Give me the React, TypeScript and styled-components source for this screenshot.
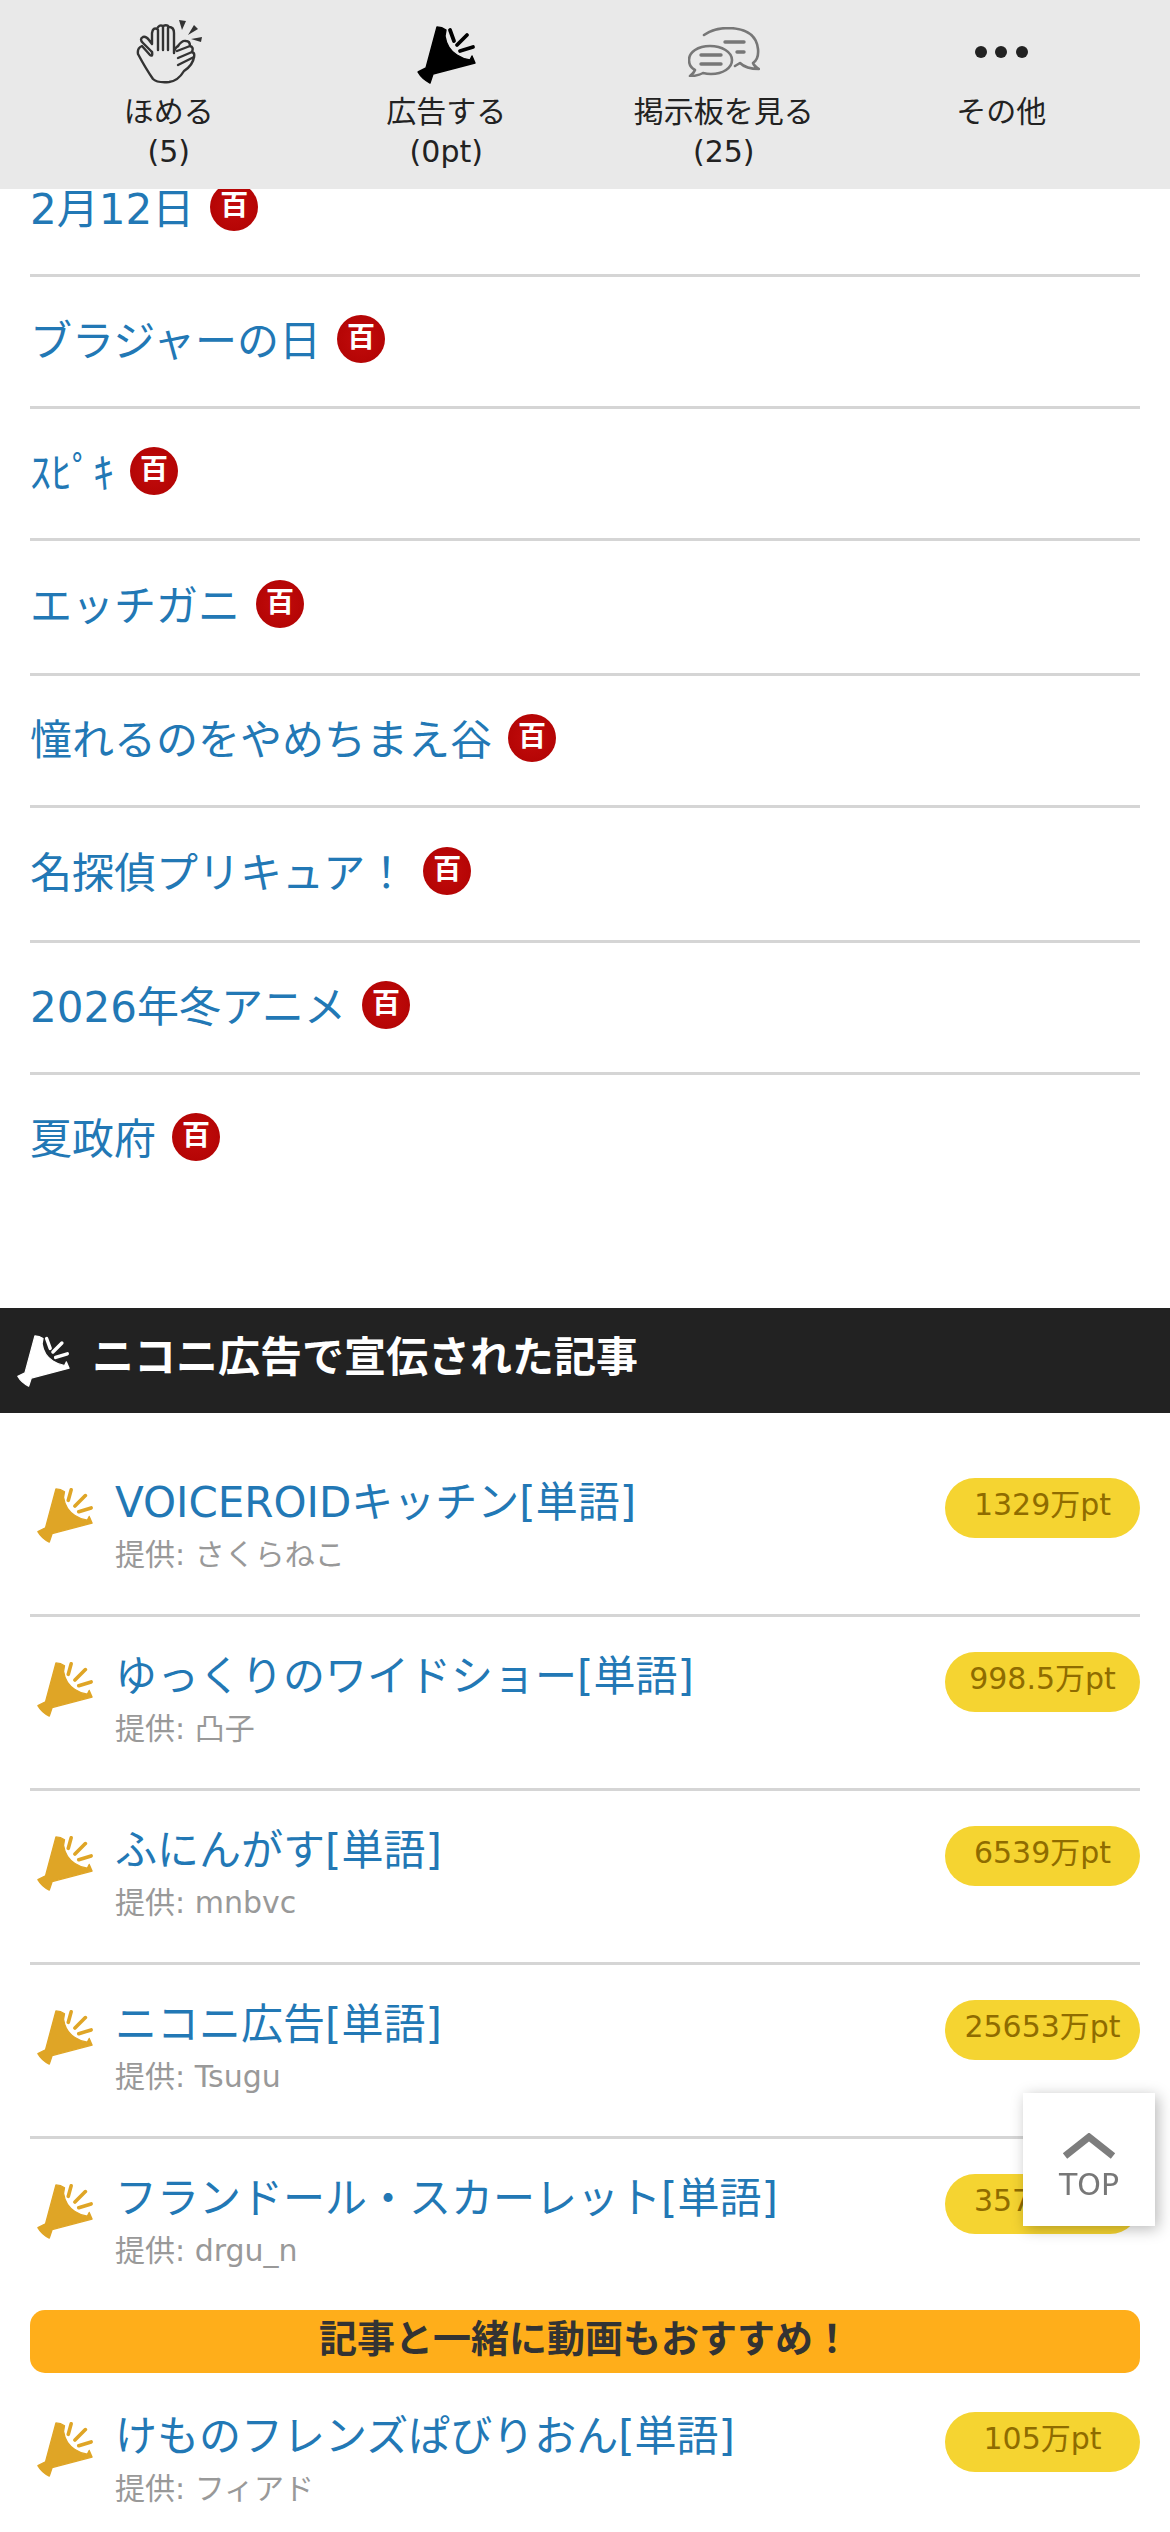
import React from 'react'
import styled, { createGlobalStyle } from 'styled-components'

const GlobalStyle = createGlobalStyle`
  html, body {
    margin: 0;
    padding: 0;
    background: #fff;
    overflow: hidden;
  }
  body {
    font-family: "DejaVu Sans", "Noto Sans CJK JP", sans-serif;
  }
  #root {
    height: 2532px;
    overflow: hidden;
  }
`

const Page = styled.div`
  position: relative;
  width: 1170px;
`

const ActionBar = styled.nav`
  position: relative;
  z-index: 2;
  height: 189px;
  padding: 0 30px;
  box-sizing: border-box;
  background: #e9e9e9;
  display: grid;
  grid-template-columns: repeat(4, 1fr);
`

const ActionItem = styled.a`
  display: flex;
  flex-direction: column;
  align-items: center;
  color: #222;
  font-size: 30px;
  line-height: 40px;
  text-align: center;
`

const ActionIcon = styled.div<{ $drop: number }>`
  height: 92px;
  box-sizing: border-box;
  padding-top: ${p => p.$drop}px;
  display: flex;
  align-items: center;
  justify-content: center;
`

const Dots = styled.div`
  display: flex;
  gap: 8.5px;
`

const Dot = styled.span`
  width: 12px;
  height: 12px;
  border-radius: 50%;
  background: #222;
`

const RelatedList = styled.ul`
  list-style: none;
  margin: -44px 30px 0;
  padding: 0 0 104px;
`

const RelatedRow = styled.li<{ $tall?: boolean }>`
  height: ${p => (p.$tall ? 132 : 129)}px;
  display: flex;
  align-items: center;
  gap: 16px;
  border-bottom: 3px solid #d5d5d5;
  &:last-child {
    border-bottom: none;
  }
`

const RelatedLink = styled.a`
  color: #2278b5;
  font-size: 42px;
  line-height: 60px;
`

const DicBadge = styled.span`
  width: 48px;
  height: 48px;
  margin-top: -6px;
  flex: none;
  border-radius: 50%;
  background: radial-gradient(circle, #c20c0c 0%, #b50505 70%, #a80000 100%);
  color: #fff;
  font-size: 28px;
  font-weight: 700;
  line-height: 46px;
  text-align: center;
`

const SectionBand = styled.h2`
  margin: 0;
  height: 105px;
  padding-left: 16px;
  display: flex;
  align-items: center;
  gap: 22px;
  background: #222;
  color: #fff;
  font-size: 42px;
  font-weight: 700;
`

const BandText = styled.span`
  margin-bottom: 14px;
`

const AdList = styled.div`
  padding: 30px 30px 0;
`

const AdRow = styled.div<{ $plain?: boolean }>`
  display: flex;
  align-items: flex-start;
  padding: 33px 0 34px;
  border-bottom: ${p => (p.$plain ? 'none' : '3px solid #d5d5d5')};
`

const AdIcon = styled.div`
  width: 57px;
  height: 57px;
  margin: 11px 22px 0 6px;
  flex: none;
`

const AdBody = styled.div`
  flex: 1;
  min-width: 0;
`

const AdTitle = styled.a`
  display: block;
  color: #2278b5;
  font-size: 42px;
  line-height: 54px;
`

const AdSponsor = styled.div`
  color: #999;
  font-size: 30px;
  line-height: 50px;
`

const PointPill = styled.div`
  width: 195px;
  height: 60px;
  margin-top: 2px;
  flex: none;
  border-radius: 30px;
  background: #f5d431;
  color: #8f6c00;
  font-size: 30px;
  line-height: 54px;
  text-align: center;
`

const PromoBanner = styled.div`
  height: 63px;
  margin-bottom: 4px;
  border-radius: 15px;
  background: #ffae1a;
  color: #333;
  font-size: 38px;
  font-weight: 700;
  line-height: 58px;
  text-align: center;
`

const TopButton = styled.a`
  position: fixed;
  right: 15px;
  top: 2093px;
  z-index: 3;
  width: 132px;
  height: 133px;
  padding-top: 40px;
  box-sizing: border-box;
  background: #fff;
  box-shadow: 3px 3px 14px rgba(0, 0, 0, 0.28);
  color: #777;
  font-size: 30px;
  line-height: 36px;
  text-align: center;
  display: flex;
  flex-direction: column;
  align-items: center;
  gap: 8px;
`

// the small list icon has its first ray leaning the other way
const RAYS_WIDE = 'M34 5 L38 16 M51 10 L41 20 M57 22 L44 26'
const RAYS_LIST = 'M37 3 L34 14 M52 9 L41 20 M58 22 L45 26'

const Megaphone = ({ color, size, rays = RAYS_WIDE }: { color: string; size: number; rays?: string }) => (
  <svg width={size} height={size} viewBox="0 0 60 60" style={{ flex: 'none', display: 'block' }}>
    <path
      fill={color}
      stroke={color}
      strokeWidth="1.4"
      strokeLinejoin="round"
      d="M21 2 Q26 2 30 5 L29 11 Q31 24 41 30 Q47 34 54 35 L56 31 L59 38 L17 49 L14 58 Q6 54 2 47 L10 43 Z"
    />
    <path stroke={color} strokeWidth="3.8" strokeLinecap="round" fill="none" d={rays} />
  </svg>
)

const ClapIcon = () => (
  <svg width="66" height="65" viewBox="0 0 66 65" fill="none" stroke="#333" strokeWidth="2.4" strokeLinecap="round" strokeLinejoin="round">
    <path d="M16 33 L7 24 Q3 20 7 18 Q10 17 13 21 L16 25 V14 Q17 8 21 10 Q23 5 27 7 Q31 5 33 8 Q38 8 38 14 V34 Q38 30 42 27" />
    <path d="M22 11 V31 M27 8 V31 M32 9 V31" />
    <path d="M16 33 Q17 38 14 36 L6 27 Q1 29 2 35 Q10 50 17 60 Q21 64 33 63 Q42 62 48 52 Q57 46 58 38 Q59 34 56 33 Q58 28 54 27 Q54 22 50 22 Q46 21 42 27" />
    <path d="M41 32 L54 27 M42 39 L56 33 M42 46 L58 38" />
    <path fill="#333" stroke="none" d="M43 1 L50 2 L46 11 Z M58 6 L62 10 L52 16 Z M66 18 L65 23 L55 20 Z" />
  </svg>
)

const ChatIcon = () => (
  <svg width="72" height="50" viewBox="0 0 72 50" fill="none" stroke="#777" strokeWidth="2.6" strokeLinecap="round" strokeLinejoin="round">
    <path d="M16 8 Q26 1 41 1 Q68 2 70 22 Q71 32 65 36 Q66 39 71 42 Q58 42 52 36 L47 39" />
    <path d="M22 19 C10 19 1 25 1 33 C1 37 3 41 7 43 Q6 46 2 49 Q10 49 15 46 Q19 47 23 47 C35 47 44 41 44 33 C44 25 34 19 22 19 Z" />
    <path strokeWidth="3.4" d="M13 28 H33 M13 37 H33 M37 15 H56 M49 25 H56" />
  </svg>
)

const relatedRows = [
  { label: '2月12日' },
  { label: 'ブラジャーの日' },
  { label: 'ｽﾋﾟｷ' },
  { label: 'エッチガニ', tall: true },
  { label: '憧れるのをやめちまえ谷' },
  { label: '名探偵プリキュア！', tall: true },
  { label: '2026年冬アニメ' },
  { label: '夏政府' },
]

const adsBeforeBanner = [
  { title: 'VOICEROIDキッチン[単語]', by: 'さくらねこ', pt: '1329万pt' },
  { title: 'ゆっくりのワイドショー[単語]', by: '凸子', pt: '998.5万pt' },
  { title: 'ふにんがす[単語]', by: 'mnbvc', pt: '6539万pt' },
  { title: 'ニコニ広告[単語]', by: 'Tsugu', pt: '25653万pt' },
  { title: 'フランドール・スカーレット[単語]', by: 'drgu_n', pt: '3570万pt', plain: true },
]

const App = () => {
  return (
    <Page>
      <GlobalStyle />
      <ActionBar>
        <ActionItem>
          <ActionIcon $drop={10}><ClapIcon /></ActionIcon>
          <span>ほめる</span>
          <span>(5)</span>
        </ActionItem>
        <ActionItem>
          <ActionIcon $drop={17}><Megaphone color="#000" size={60} /></ActionIcon>
          <span>広告する</span>
          <span>(0pt)</span>
        </ActionItem>
        <ActionItem>
          <ActionIcon $drop={11}><ChatIcon /></ActionIcon>
          <span>掲示板を見る</span>
          <span>(25)</span>
        </ActionItem>
        <ActionItem>
          <ActionIcon $drop={12}><Dots><Dot /><Dot /><Dot /></Dots></ActionIcon>
          <span>その他</span>
        </ActionItem>
      </ActionBar>

      <RelatedList>
        {relatedRows.map(row => (
          <RelatedRow key={row.label} $tall={row.tall}>
            <RelatedLink>{row.label}</RelatedLink>
            <DicBadge>百</DicBadge>
          </RelatedRow>
        ))}
      </RelatedList>

      <SectionBand>
        <Megaphone color="#fff" size={54} />
        <BandText>ニコニ広告で宣伝された記事</BandText>
      </SectionBand>

      <AdList>
        {adsBeforeBanner.map(ad => (
          <AdRow key={ad.title} $plain={ad.plain}>
            <AdIcon><Megaphone color="#dfa526" size={57} rays={RAYS_LIST} /></AdIcon>
            <AdBody>
              <AdTitle>{ad.title}</AdTitle>
              <AdSponsor>提供: {ad.by}</AdSponsor>
            </AdBody>
            <PointPill>{ad.pt}</PointPill>
          </AdRow>
        ))}
        <PromoBanner>記事と一緒に動画もおすすめ！</PromoBanner>
        <AdRow $plain>
          <AdIcon><Megaphone color="#dfa526" size={57} rays={RAYS_LIST} /></AdIcon>
          <AdBody>
            <AdTitle>けものフレンズぱびりおん[単語]</AdTitle>
            <AdSponsor>提供: フィアド</AdSponsor>
          </AdBody>
          <PointPill>105万pt</PointPill>
        </AdRow>
      </AdList>

      <TopButton>
        <svg width="54" height="26" viewBox="0 0 54 26" fill="none" stroke="#7d7d7d" strokeWidth="7">
          <path d="M3 23 L27 4 L51 23" />
        </svg>
        TOP
      </TopButton>
    </Page>
  )
}

export default App
